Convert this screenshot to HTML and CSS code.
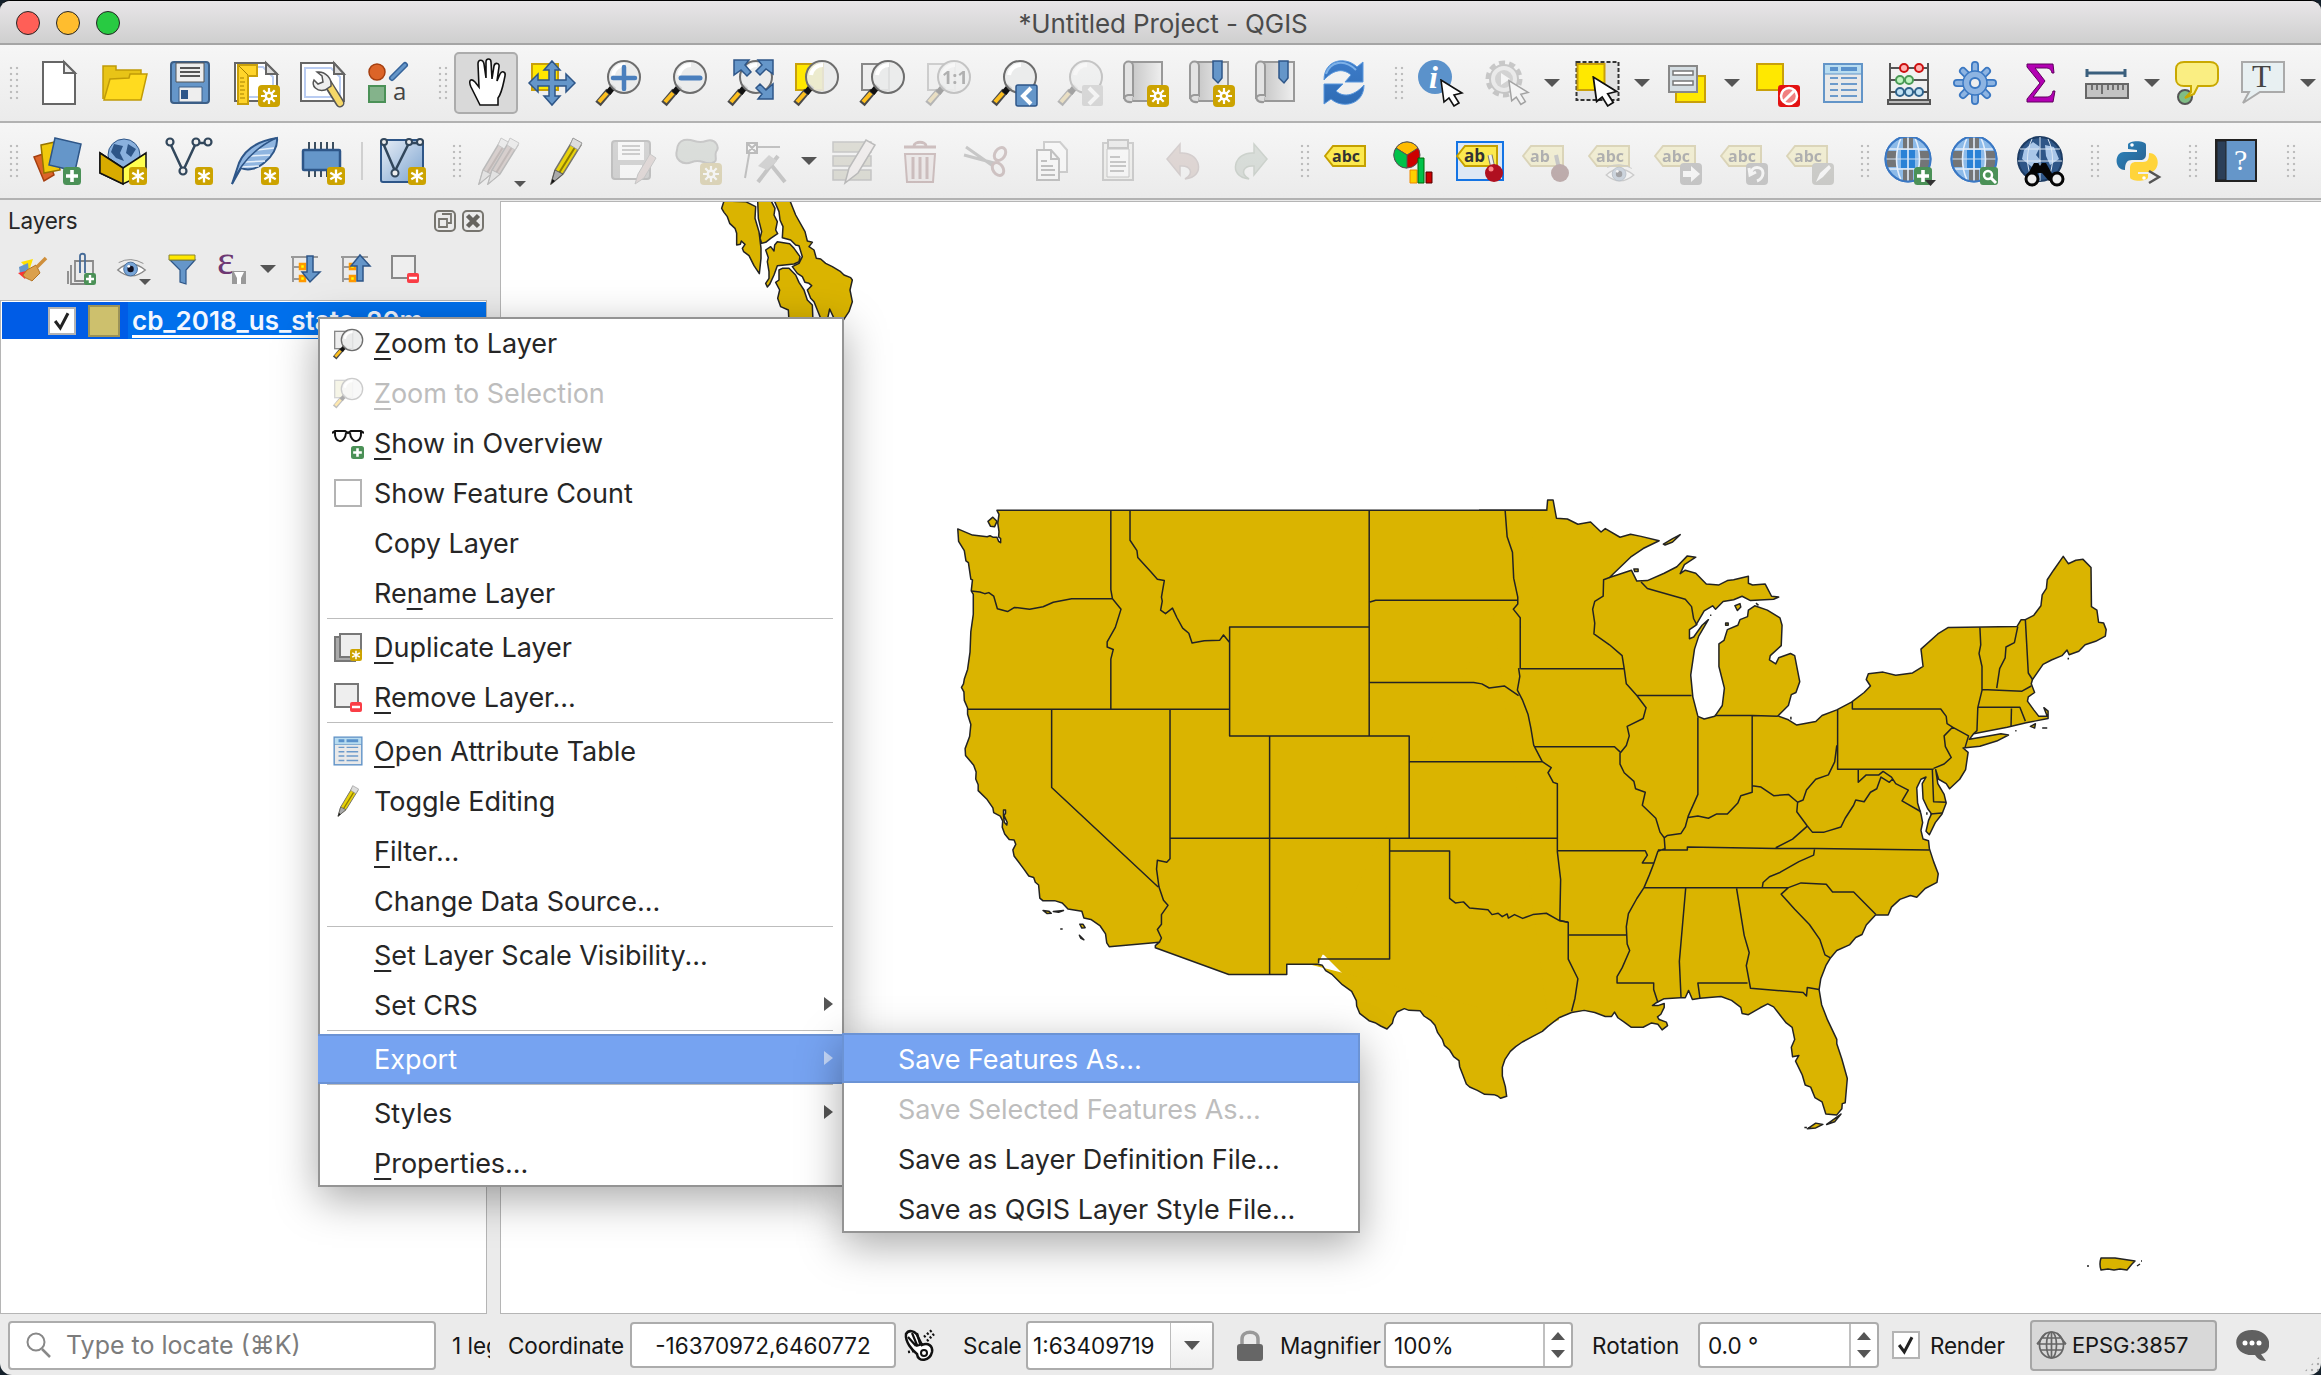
FILE: index.html
```html
<!DOCTYPE html>
<html lang="en">
<head>
<meta charset="utf-8">
<title>*Untitled Project - QGIS</title>
<link rel="stylesheet" href="styles.css">
</head>
<body>
<svg class="defs" width="0" height="0">
  <defs>
    <linearGradient id="py" x1="0" y1="0" x2="1" y2="1"><stop offset="0" stop-color="#2a86c0"/><stop offset="1" stop-color="#2b5f8c"/></linearGradient>
    <linearGradient id="blue" x1="0" y1="0" x2="1" y2="1"><stop offset="0" stop-color="#e8eef6"/><stop offset="1" stop-color="#7ba3d0"/></linearGradient>
    <linearGradient id="scroll" x1="0" y1="0" x2="1" y2="0"><stop offset="0" stop-color="#c8c8c8"/><stop offset="1" stop-color="#efefef"/></linearGradient>
    <linearGradient id="refresh" x1="0" y1="0" x2="0" y2="1"><stop offset="0" stop-color="#3d7cc9"/><stop offset="1" stop-color="#2f6cb5"/></linearGradient>
  </defs>
  <symbol id="star" viewBox="0 0 22 22"><rect width="22" height="22" rx="4" fill="#cca300"/><path d="M11 3v16M4 7l14 8M18 7L4 15" stroke="#fff" stroke-width="2.8" fill="none"/></symbol>
  <symbol id="gearstar" viewBox="0 0 22 22"><rect width="22" height="22" rx="4" fill="#cca300"/><path d="M11 3v16M3 11h16M5.3 5.3l11.400 11.400M16.700 5.300L5.300 16.700" stroke="#fff" stroke-width="2.200" fill="none"/><circle cx="11" cy="11" r="4.500" fill="#fff"/><circle cx="11" cy="11" r="2" fill="#cca300"/></symbol>
  <symbol id="plus" viewBox="0 0 18 18"><rect width="18" height="18" rx="3.500" fill="#4b9157"/><path d="M9 3v12M3 9h12" stroke="#fff" stroke-width="3.600"/></symbol>
  <symbol id="loupe" viewBox="0 0 48 48"><path d="M4 45L15 32" stroke="#4a4a4a" stroke-width="7"/><path d="M5 43L13 34" stroke="#fdbf1e" stroke-width="4"/><path d="M14 34L20 27" stroke="#111" stroke-width="6"/><circle cx="30" cy="18" r="16" fill="#e9ebeb" fill-opacity=".88" stroke="#6d6d6d" stroke-width="2"/><path d="M19 16c1-6 6-10 12-10" stroke="#fff" stroke-width="4" fill="none"/></symbol>
  <symbol id="pencil" viewBox="0 0 48 48"><path d="M9 47l4-14L31 3l8 5-18 29z" fill="#e8d20a" stroke="#77756b" stroke-width="1.500"/><path d="M17 36L35 7" stroke="#8c7c00" stroke-width="2"/><path d="M9 47l4-14 8 4z" fill="#aaa" stroke="#555"/><path d="M28 8l3-7 9 5-4 7z" fill="#ddd" stroke="#999"/><path d="M9 47l1.500-5 2.500 2z" fill="#111"/></symbol>
  <symbol id="redpencil" viewBox="0 0 48 48"><path d="M9 47l4-14L31 3l8 5-18 29z" fill="#b98a80" stroke="#555" stroke-width="1.500"/><path d="M17 36L35 7" stroke="#7a4c44" stroke-width="2"/><path d="M9 47l4-14 8 4z" fill="#ccc" stroke="#555"/><path d="M28 8l3-7 9 5-4 7z" fill="#ddd" stroke="#777"/></symbol>
  <symbol id="tag" viewBox="0 0 48 48"><path d="M1 19L9 9h32v20H9z" fill="#fce94f" stroke="#c4a000" stroke-width="2"/></symbol>
  <symbol id="globe" viewBox="0 0 48 48"><circle cx="24" cy="22" r="22.500" fill="#8dbbe9" stroke="#3a78c4" stroke-width="2"/><path d="M3 14h10v16H3zM19 1h10v11H19zM19 32h10v12H19zM35 14h10v16H35z" fill="#737577"/><path d="M17 13h14v18H17z" fill="#2b82d6"/><path d="M24 0v44M4 12h40M4 32h40" stroke="#e4eefa" stroke-width="1.600"/><path d="M2 22h44" stroke="#cfe0f2" stroke-width="1.200"/><path d="M17 1c-6 13-6 29 0 42M31 1c6 13 6 29 0 42" stroke="#e4eefa" stroke-width="1.600" fill="none"/><circle cx="24" cy="22" r="22.500" fill="none" stroke="#3a78c4" stroke-width="2"/></symbol>
  <symbol id="cursor" viewBox="0 0 24 28"><path d="M1 1l3 22 5-4 5 8 5-3-5-8 8-2z" fill="#fff" stroke="#111" stroke-width="1.600"/></symbol>
  <symbol id="table" viewBox="0 0 48 48"><rect x="5" y="5" width="38" height="38" fill="#e9e9e9" stroke="#6395c8" stroke-width="2"/><rect x="6" y="6" width="36" height="9" fill="#b8dcf0"/><path d="M11 10h8M22 10h16" stroke="#5a92cc" stroke-width="4"/><path d="M11 19h8M22 19h16M11 25h8M22 25h16M11 31h8M22 31h16M11 37h8M22 37h16" stroke="#6c9acb" stroke-width="2"/><path d="M5 15h38" stroke="#6395c8"/></symbol>
  <symbol id="scrollbook" viewBox="0 0 48 48"><path d="M10 3h30v39H10z" fill="url(#scroll)" stroke="#999" stroke-width="2"/><path d="M2 7c0-6 9-6 9 0v30H7c-4 0-5 3-5 3z" fill="#e3e3e3" stroke="#999" stroke-width="2"/><path d="M10 43c-8 1-10-6-4-7h5" fill="#ddd" stroke="#999" stroke-width="2"/></symbol>
  <symbol id="eye" viewBox="0 0 32 24"><path d="M1 13Q15 0 31 13Q16 26 1 13z" fill="#fff" stroke="#888" stroke-width="1.500"/><circle cx="15" cy="12" r="7.500" fill="#77a5d8" stroke="#456b98"/><circle cx="15" cy="12" r="3.500" fill="#112"/><circle cx="13" cy="9" r="1.500" fill="#fff"/><path d="M2 5Q15-2 29 6" stroke="#888" fill="none"/></symbol>
</svg>

<div class="window">
  <header class="titlebar">
    <div class="lights"><i class="red"></i><i class="amber"></i><i class="green"></i></div>
    <h1>*Untitled Project - QGIS</h1>
  </header>

  <div class="toolbar top">
    <span class="handle first"></span>
    <span class="tool"><svg viewBox="0 0 48 48"><path d="M9 3h21l11 11v31H9z" fill="#fff" stroke="#666" stroke-width="2"/><path d="M30 3v11h11z" fill="#eee" stroke="#666" stroke-width="2"/></svg></span>
    <span class="tool"><svg viewBox="0 0 48 48"><path d="M3 40V7h13v4h25v8" fill="#e8c417" stroke="#c09b08" stroke-width="1.500"/><path d="M10 20l19-1 1-4h17l-6 26H4z" fill="#ffdb1f" stroke="#c09b08" stroke-width="1.500"/></svg></span>
    <span class="tool"><svg viewBox="0 0 48 48"><rect x="5" y="3" width="38" height="41" rx="3" fill="#6596c9" stroke="#3c5f87" stroke-width="2"/><path d="M10 4h28v19H10z" fill="#eee" stroke="#555"/><path d="M14 9h20M14 13h20M14 17h20" stroke="#555" stroke-width="2"/><path d="M13 28h23v15H13z" fill="#eee" stroke="#3c5f87"/><rect x="15" y="31" width="7" height="9" fill="#2e5688"/></svg></span>
    <span class="tool"><svg viewBox="0 0 48 48"><path d="M3 4h31l11 11v27H3z" fill="#fff" stroke="#666" stroke-width="2"/><path d="M7 8h24l10 10v20H7z" fill="none" stroke="#b9ccf2" stroke-width="2"/><path d="M34 4v11h11z" fill="#ddd" stroke="#666" stroke-width="2"/><path d="M6 6h19v11H16v28H6z" fill="#ffd42a" stroke="#c9a00a" stroke-width="2"/><path d="M8 19h4M8 23h5M8 27h4M8 31h5M8 35h4M8 39h5M7 7l9 9" stroke="#a58000"/><use href="#gearstar" x="26" y="26" width="22" height="22"/></svg></span>
    <span class="tool"><svg viewBox="0 0 48 48"><path d="M3 4h33l10 11v27H3z" fill="#fff" stroke="#666" stroke-width="2"/><path d="M7 9h26l9 9v20H7z" fill="none" stroke="#b9ccf2" stroke-width="2"/><path d="M36 4v11h10z" fill="#ddd" stroke="#666" stroke-width="2"/><path d="M30 25l12 19" stroke="#555" stroke-width="9" stroke-linecap="round"/><path d="M31 26l11 18" stroke="#f5d768" stroke-width="6" stroke-linecap="round"/><path d="M19 13l5 4 1 6-5 2-4-4c-3 6 3 12 11 10l6-4c1-7-5-15-14-14z" fill="#eee" stroke="#555" stroke-width="1.500"/></svg></span>
    <span class="tool"><svg viewBox="0 0 48 48"><circle cx="13" cy="13" r="8" fill="#dc6428" stroke="#a53f10" stroke-width="1.500"/><path d="M28 19L41 6" stroke="#35639a" stroke-width="6" stroke-linecap="round"/><path d="M28 19L41 6" stroke="#6596c9" stroke-width="3" stroke-linecap="round"/><rect x="5" y="27" width="16" height="16" fill="#84b38b" stroke="#4b9157" stroke-width="2"/><text x="29" y="41" class="g-sans" font-size="24" fill="#444">a</text></svg></span>
    <span class="handle"></span>
    <span class="tool active"><svg viewBox="0 0 48 48"><path d="M18 46L9 28C6 21 9 19 13 23l4 5-1-23c0-5 5-5 6 0l2 14V3c0-4 5-4 5 0l1 17 2-13c1-4 6-3 5 1l-2 14 3-7c2-4 6-2 5 2-2 9-3 17-7 22v7z" fill="#fff" stroke="#111" stroke-width="1.600"/></svg></span>
    <span class="tool"><svg viewBox="0 0 48 48"><rect x="4" y="5" width="26" height="26" fill="#ffe800" stroke="#c9a00a" stroke-width="2"/><path d="M24 2l8 9h-5v10h11v-6l9 9-9 9v-6H27v10h5l-8 9-8-9h5V27H10v6l-9-9 9-9v6h11V11h-5z" fill="#6596c9" stroke="#2e5688" stroke-width="1.500"/></svg></span>
    <span class="tool"><svg viewBox="0 0 48 48"><use href="#loupe"/><path d="M30 8v22M19 19h22" stroke="#4a7fbd" stroke-width="4.500" stroke-linecap="round"/></svg></span>
    <span class="tool"><svg viewBox="0 0 48 48"><use href="#loupe"/><path d="M21 19h19" stroke="#4a7fbd" stroke-width="5" stroke-linecap="round"/></svg></span>
    <span class="tool"><svg viewBox="0 0 48 48"><use href="#loupe"/><path d="M8 1h15l-4 5 6 7-4 4-6-6-7 5zM47 1H32l4 5-6 6 4 4 6-6 7 5zM47 40H32l4-5-6-6 4-4 6 6 7-6z" fill="#6596c9" stroke="#2e5688" stroke-width="1.500"/></svg></span>
    <span class="tool"><svg viewBox="0 0 48 48"><rect x="4" y="5" width="27" height="26" fill="#ffe800" stroke="#c9a00a" stroke-width="2"/><use href="#loupe"/></svg></span>
    <span class="tool"><svg viewBox="0 0 48 48"><rect x="4" y="5" width="27" height="26" fill="#eee" stroke="#888" stroke-width="2"/><use href="#loupe"/></svg></span>
    <span class="tool off"><svg viewBox="0 0 48 48"><rect x="4" y="5" width="27" height="26" fill="#eee" stroke="#888" stroke-width="2"/><use href="#loupe"/><text x="18" y="25" class="g-sans" font-weight="700" font-size="18" fill="#333">1:1</text></svg></span>
    <span class="tool"><svg viewBox="0 0 48 48"><use href="#loupe"/><rect x="26" y="26" width="21" height="21" rx="2" fill="#6596c9" stroke="#2e5688" stroke-width="1.500"/><path d="M41 29l-8 8 8 8" stroke="#fff" stroke-width="4" fill="none"/></svg></span>
    <span class="tool off"><svg viewBox="0 0 48 48"><use href="#loupe"/><rect x="26" y="26" width="21" height="21" rx="2" fill="#aaa"/><path d="M33 29l8 8-8 8" stroke="#fff" stroke-width="4" fill="none"/></svg></span>
    <span class="tool"><svg viewBox="0 0 48 48"><use href="#scrollbook"/><use href="#gearstar" x="25" y="26" width="22" height="22"/></svg></span>
    <span class="tool"><svg viewBox="0 0 48 48"><use href="#scrollbook"/><path d="M25 2h9v17l-4 5-5-5z" fill="#6596c9" stroke="#2e5688" stroke-width="1.500"/><use href="#gearstar" x="25" y="26" width="22" height="22"/></svg></span>
    <span class="tool"><svg viewBox="0 0 48 48"><use href="#scrollbook"/><path d="M25 2h9v17l-4 5-5-5z" fill="#6596c9" stroke="#2e5688" stroke-width="1.500"/></svg></span>
    <span class="tool"><svg viewBox="0 0 48 48"><path d="M4 21C4 0 26-3 37 8l6-5v20H25l6-7c-9-8-19-4-27 5zM44 26C44 46 22 50 11 40l-7 5V25h19l-7 7c9 8 20 3 28-6z" fill="url(#refresh)" stroke="#5a98de"/><path d="M6 15C10 3 24-1 36 11" fill="none" stroke="#7db1e8" stroke-width="2"/></svg></span>
    <span class="handle third"></span>
    <span class="tool"><svg viewBox="0 0 48 48"><circle cx="18" cy="18" r="17" fill="#5b92cb"/><text x="12" y="29" class="g-serif" font-size="32" font-style="italic" font-weight="700" fill="#fff">i</text><use href="#cursor" x="23" y="20" width="24" height="28"/></svg></span>
    <span class="tool off"><svg viewBox="0 0 48 48"><circle cx="21" cy="20" r="16" fill="none" stroke="#777" stroke-width="5" stroke-dasharray="6 4"/><circle cx="21" cy="20" r="14" fill="#ddd" stroke="#777" stroke-width="2"/><circle cx="21" cy="20" r="9" fill="#999"/><path d="M18 14l9 6-9 6z" fill="#fff"/><use href="#cursor" x="25" y="20" width="22" height="27"/></svg></span>
    <span class="drop"></span>
    <span class="tool"><svg viewBox="-1.500 0 48 48"><rect x="2" y="3" width="42" height="38" fill="#e2e2e2" stroke="#333" stroke-width="2" stroke-dasharray="4 2"/><rect x="3" y="5" width="27" height="26" fill="#ffe800" stroke="#c9a00a" stroke-width="2"/><use href="#cursor" x="17" y="17" width="28" height="31"/></svg></span>
    <span class="drop"></span>
    <span class="tool"><svg viewBox="-1 0 48 48"><rect x="12" y="17" width="29" height="26" fill="#ffe800" stroke="#c9a00a" stroke-width="2"/><rect x="5" y="7" width="28" height="26" fill="#d4dde2" stroke="#888" stroke-width="2"/><path d="M9 12h20v4H9zM9 22h20v4H9z" fill="#fff" stroke="#777" stroke-width="1.500"/></svg></span>
    <span class="drop"></span>
    <span class="tool"><svg viewBox="0 0 48 48"><rect x="4" y="5" width="26" height="26" fill="#ffe800" stroke="#c9a00a" stroke-width="2"/><rect x="25" y="26" width="22" height="22" rx="3" fill="#e31212"/><circle cx="36" cy="37" r="8" fill="#f08080" stroke="#fff" stroke-width="2.500"/><path d="M31 42l10-10" stroke="#fff" stroke-width="3"/></svg></span>
    <span class="tool"><svg viewBox="0 0 48 48"><use href="#table"/></svg></span>
    <span class="tool"><svg viewBox="0 0 48 48"><path d="M5 4v37M43 4v37M5 9h38M5 21h38M5 33h38" stroke="#555" stroke-width="2"/><g stroke-width="2"><g fill="#ffb3b3" stroke="#c11"><circle cx="19" cy="9" r="4"/><circle cx="34" cy="9" r="4"/></g><g fill="#c0f5c0" stroke="#4a9a55"><circle cx="15" cy="21" r="4"/><circle cx="24" cy="21" r="4"/></g><g fill="#c2e2f5" stroke="#30638c"><circle cx="15" cy="33" r="4"/><circle cx="24" cy="33" r="4"/><circle cx="34" cy="33" r="4"/></g></g><rect x="3" y="41" width="42" height="4" fill="#bbb" stroke="#555" stroke-width="2"/></svg></span>
    <span class="tool"><svg viewBox="0 0 48 48"><g stroke="#3b78c2" stroke-width="8" stroke-linecap="round"><path d="M24 6v36M6 24h36M12 12l24 24M36 12L12 36"/></g><g stroke="#8db4e2" stroke-width="4.500" stroke-linecap="round"><path d="M24 6v36M6 24h36M12 12l24 24M36 12L12 36"/></g><circle cx="24" cy="24" r="12" fill="#8db4e2" stroke="#3b78c2" stroke-width="1.500"/><circle cx="24" cy="24" r="5" fill="#eee" stroke="#3b78c2" stroke-width="2"/></svg></span>
    <span class="tool"><svg viewBox="0 0 48 48"><path d="M10 5h26l1 9h-2c-1-4-3-5-7-5H18l10 13-12 16h13c4 0 6-2 7-6h2l-2 11H10v-3l13-16L10 8z" fill="#b300b3" stroke="#5e005e"/></svg></span>
    <span class="tool"><svg viewBox="0 0 48 48"><path d="M4 14h38M4 10v8M42 10v8" stroke="#3a5f7d" stroke-width="3"/><rect x="3" y="25" width="42" height="14" fill="#c3c3c3" stroke="#666" stroke-width="2"/><path d="M9 26v5M14 26v5M19 26v9M25 26v5M30 26v5M35 26v5M40 26v5" stroke="#555" stroke-width="1.500"/></svg></span>
    <span class="drop"></span>
    <span class="tool"><svg viewBox="0 0 48 48"><circle cx="12" cy="38" r="7" fill="#80bd86" stroke="#555" stroke-width="2"/><path d="M11 3h26c5 0 8 3 8 7v10c0 4-3 7-8 7H25l-4 8-9 4 6-6v-6h-7c-5 0-8-3-8-7V10c0-4 3-7 8-7z" fill="#faee82" stroke="#c9a800" stroke-width="2"/></svg></span>
    <span class="tool"><svg viewBox="0 0 48 48"><path d="M3 3h42v30H21L4 44l6-11H3z" fill="#e8f0f2" stroke="#aaa" stroke-width="2"/><text x="13" y="28" class="g-serif" font-size="31" fill="#444">T</text></svg></span>
    <span class="drop"></span>
  </div>

  <div class="toolbar">
    <span class="handle first"></span>
    <span class="tool"><svg viewBox="0 0 48 48"><path d="M1 20l12-4 8 22-10 6z" fill="#dc6428" stroke="#a53f10" stroke-width="1.500"/><path d="M8 8l14-3 5 28-16 3z" fill="#f0c90c" stroke="#967300" stroke-width="1.500"/><path d="M22 1l26 6-6 27-26-6z" fill="#6596c9" stroke="#2e5688" stroke-width="1.500"/><use href="#plus" x="30" y="30" width="18" height="18"/></svg></span>
    <span class="tool"><svg viewBox="0 0 48 48"><circle cx="25" cy="18" r="16" fill="#8ab1de" stroke="#2e5688"/><path d="M15 7l9 2-3 7 4 8-8-3-5-6zM29 7l8 5-5 8-5-4z" fill="#2e5688"/><path d="M1 16l23 15 23-15v20L24 47 1 36z" fill="#ffff4f" stroke="#111" stroke-width="1.500"/><path d="M1 16l23 15v16L1 36z" fill="#d9ab00" stroke="#111" stroke-width="1.500"/><use href="#star" x="30" y="30" width="18" height="18"/></svg></span>
    <span class="tool"><svg viewBox="0 0 48 48"><path d="M5 6l13 28L31 6h11" stroke="#32475c" stroke-width="2.500" fill="none"/><g fill="#eee" stroke="#32475c" stroke-width="2.200"><circle cx="5" cy="5" r="3.500"/><circle cx="18" cy="34" r="3.500"/><circle cx="31" cy="5" r="3.500"/><circle cx="43" cy="5" r="3.500"/></g><use href="#star" x="30" y="30" width="18" height="18"/></svg></span>
    <span class="tool"><svg viewBox="0 0 48 48"><path d="M1 47l7-21C14 12 26 4 46 1c1 9-5 19-13 25-7 6-16 8-23 5z" fill="#8fb5e0" stroke="#2e5688" stroke-width="2"/><path d="M14 25l20-1M19 19l20-1M26 13l17-2M10 30l18-1" stroke="#e7f0fa" stroke-width="1.500" fill="none"/><path d="M1 47C9 27 22 12 45 1" stroke="#2e5688" fill="none" stroke-width="1.500"/><use href="#star" x="30" y="30" width="18" height="18"/></svg></span>
    <span class="tool"><svg viewBox="0 0 48 48"><path d="M12 5v35M18 5v35M24 5v35M30 5v35M36 5v35" stroke="#3c4f60" stroke-width="2"/><rect x="6" y="13" width="37" height="20" rx="1" fill="#6596c9" stroke="#2e5688" stroke-width="2.500"/><use href="#star" x="30" y="30" width="18" height="18"/></svg></span>
    <span class="vsep"></span>
    <span class="tool"><svg viewBox="0 0 48 48"><rect x="3" y="3" width="42" height="42" rx="2" fill="url(#blue)" stroke="#2e5688" stroke-width="2"/><path d="M5 6l12 28L31 6h11" stroke="#32475c" stroke-width="2.500" fill="none"/><g fill="#eee" stroke="#32475c" stroke-width="2"><circle cx="6" cy="5" r="3"/><circle cx="17" cy="36" r="3.500"/><circle cx="31" cy="5" r="3"/><circle cx="42" cy="5" r="3"/></g><use href="#star" x="30" y="30" width="18" height="18"/></svg></span>
    <span class="handle"></span>
    <span class="tool off"><svg viewBox="0 0 48 48"><use href="#redpencil" x="-6"/><use href="#redpencil" x="3"/></svg><b class="corner"></b></span>
    <span class="tool"><svg viewBox="0 0 48 48"><use href="#pencil"/></svg></span>
    <span class="tool off"><svg viewBox="0 0 48 48"><rect x="4" y="4" width="38" height="38" rx="3" fill="#999" stroke="#666" stroke-width="2"/><path d="M10 5h26v18H10z" fill="#fff"/><path d="M14 9h18M14 13h18M14 17h18" stroke="#888" stroke-width="2"/><path d="M12 28h22v13H12z" fill="#fff"/><path d="M27 47l3-10 12-20 6 4-12 20z" fill="#d3a5a0" stroke="#777"/></svg></span>
    <span class="tool off"><svg viewBox="0 0 48 48"><path d="M10 3c10-2 12 5 22 1 10-3 14 6 10 11-2 5 3 9-4 11-8 2-11-5-20-1C8 29 0 22 3 13c0-5 3-9 7-10z" fill="#a9b9a9" stroke="#777" stroke-width="2"/><use href="#gearstar" x="26" y="26" width="22" height="22"/></svg></span>
    <span class="tool off"><svg viewBox="0 0 48 48"><path d="M12 10h28M10 12L5 41" stroke="#666" stroke-width="2"/><path d="M7 6h10v10H7zM7 6l10 10M17 6L7 16" fill="#fff" stroke="#555" stroke-width="2"/><path d="M18 45l20-26M28 24l17 21" stroke="#777" stroke-width="4"/><path d="M18 29l11-11 8 6-10 9z" fill="#999"/></svg></span>
    <span class="drop"></span>
    <span class="tool off"><svg viewBox="0 0 48 48"><g fill="#b5b38a" stroke="#777" stroke-width="1.500"><path d="M3 5h38v10H3zM3 19h38v10H3zM3 33h38v10H3z"/></g><path d="M15 46l4-15L36 3l9 5-17 28z" fill="#f2e0de" stroke="#555" stroke-width="1.500"/></svg></span>
    <span class="tool off"><svg viewBox="0 0 48 48"><path d="M9 17h30l-2 28H11z" fill="#ead5d5" stroke="#a55" stroke-width="2"/><path d="M8 10h32M18 9c0-5 12-5 12 0M17 20v22M24 20v22M31 20v22" stroke="#a55" stroke-width="3" fill="none"/></svg></span>
    <span class="tool off"><svg viewBox="0 0 48 48"><path d="M2 18l30 8M4 10l27 19" stroke="#777" stroke-width="3"/><ellipse cx="38" cy="17" rx="5" ry="7" transform="rotate(35 38 17)" fill="none" stroke="#a66" stroke-width="3"/><ellipse cx="36" cy="32" rx="5" ry="7" transform="rotate(-35 36 32)" fill="none" stroke="#a66" stroke-width="3"/></svg></span>
    <span class="tool off"><svg viewBox="0 0 48 48"><path d="M16 5h16l7 8v22H16z" fill="#fff" stroke="#888" stroke-width="2"/><path d="M9 13h14l8 9v21H9z" fill="#fff" stroke="#666" stroke-width="2"/><path d="M23 13v9h8M13 24h6M13 29h12M13 33h14M13 38h14" stroke="#666" stroke-width="2" fill="none"/></svg></span>
    <span class="tool off"><svg viewBox="0 0 48 48"><path d="M9 6h30v37H9z" fill="#e9e9e0" stroke="#888" stroke-width="2"/><path d="M13 12h22v28H13z" fill="#fff" stroke="#777"/><path d="M14 3h20v8H14z" fill="#ddd" stroke="#777" stroke-width="2"/><path d="M16 20h10M16 25h16M16 29h16M16 34h14" stroke="#777" stroke-width="2"/></svg></span>
    <span class="tool off"><svg viewBox="0 0 48 48"><path d="M7 22L20 7v9c20-2 27 24 5 26 10-6 5-14-5-13v9z" fill="#cf9f92" stroke="#a88" stroke-width="1.500"/></svg></span>
    <span class="tool off"><svg viewBox="0 0 48 48"><path d="M41 22L28 7v9C8 14 1 40 23 42c-10-6-5-14 5-13v9z" fill="#a0bba4" stroke="#7c9c7c" stroke-width="1.500"/></svg></span>
    <span class="handle"></span>
    <span class="tool"><svg viewBox="0 0 48 48"><use href="#tag"/><text x="8" y="25" class="g-sans" font-weight="700" font-size="16" fill="#333">abc</text></svg></span>
    <span class="tool"><svg viewBox="0 0 48 48"><circle cx="17" cy="18" r="13" fill="#c00" stroke="#555"/><path d="M17 18L6 11A13 13 0 0 1 28 11z" fill="#fb0" stroke="#555"/><path d="M17 18L6 11A13 13 0 0 0 17 31z" fill="#00c24a" stroke="#555"/><path d="M20 33h7v13h-7z" fill="#ffd000" stroke="#e80"/><path d="M28 21h6v25h-6z" fill="#00c24a" stroke="#060"/><path d="M36 35h6v11h-6z" fill="#c00" stroke="#500"/></svg></span>
    <span class="tool"><svg viewBox="0 0 48 48"><rect x="1" y="5" width="46" height="38" fill="#dde8f5" stroke="#1474e4" stroke-width="2"/><use href="#tag"/><text x="8" y="25" class="g-sans" font-weight="700" font-size="17" fill="#333">ab</text><path d="M34 18l4 18" stroke="#777" stroke-width="5"/><path d="M34 18l4 18" stroke="#eee" stroke-width="3"/><circle cx="38" cy="36" r="9" fill="#b01020"/><circle cx="35" cy="32" r="2.500" fill="#f88"/></svg></span>
    <span class="tool off"><svg viewBox="0 0 48 48"><use href="#tag"/><text x="8" y="25" class="g-sans" font-weight="700" font-size="16" fill="#333">ab</text><path d="M34 18l4 18" stroke="#777" stroke-width="4"/><circle cx="38" cy="36" r="9" fill="#822"/></svg></span>
    <span class="tool off"><svg viewBox="0 0 48 48"><use href="#tag"/><text x="8" y="25" class="g-sans" font-weight="700" font-size="16" fill="#333">abc</text><use href="#eye" x="16" y="26" width="32" height="22"/></svg></span>
    <span class="tool off"><svg viewBox="0 0 48 48"><use href="#tag"/><text x="8" y="25" class="g-sans" font-weight="700" font-size="16" fill="#333">abc</text><rect x="26" y="26" width="22" height="22" rx="4" fill="#777"/><path d="M29 34h8v-5l9 8-9 8v-5h-8z" fill="#fff"/></svg></span>
    <span class="tool off"><svg viewBox="0 0 48 48"><use href="#tag"/><text x="8" y="25" class="g-sans" font-weight="700" font-size="16" fill="#333">abc</text><rect x="26" y="26" width="22" height="22" rx="4" fill="#777"/><path d="M31 37c0-9 12-8 12-1 0 4-3 7-6 8M36 35l-6 3-1-7" stroke="#fff" stroke-width="3" fill="none"/></svg></span>
    <span class="tool off"><svg viewBox="0 0 48 48"><use href="#tag"/><text x="8" y="25" class="g-sans" font-weight="700" font-size="16" fill="#333">abc</text><rect x="26" y="26" width="22" height="22" rx="4" fill="#887"/><path d="M30 45l4-9 9-8 2 3-8 9z" fill="#fff"/></svg></span>
    <span class="handle"></span>
    <span class="tool"><svg viewBox="0 0 48 48"><use href="#globe"/><use href="#plus" x="30" y="30" width="18" height="18"/><path d="M41 43h11l-5.500 6z" fill="#333"/></svg></span>
    <span class="tool"><svg viewBox="0 0 48 48"><use href="#globe"/><rect x="30" y="30" width="18" height="18" rx="3" fill="#4b9157"/><circle cx="38" cy="38" r="4" fill="none" stroke="#fff" stroke-width="2.500"/><path d="M41 41l5 5" stroke="#fff" stroke-width="3"/></svg></span>
    <span class="tool"><svg viewBox="0 0 48 48"><circle cx="24" cy="22" r="22" fill="#2e5688" stroke="#1d3c63" stroke-width="2"/><path d="M8 13l9-8 7 5-4 8 5 6-9 6-10-8zM29 8l9 2 5 12-9 6-4-9z" fill="#a9c6e8"/><path d="M24 0v44M4 12h40M2 24h44M16 2c-6 13-6 27 0 40M32 2c6 13 6 27 0 40" stroke="#dbe7f4" fill="none"/><path d="M9 42l9-16h4l2 3 2-3h4l9 16-6 2-7-8h-4l-7 8z" fill="#050505"/><circle cx="16" cy="42" r="6" fill="#eee" stroke="#050505" stroke-width="3"/><circle cx="41" cy="42" r="6" fill="#eee" stroke="#050505" stroke-width="3"/></svg></span>
    <span class="handle"></span>
    <span class="tool"><svg viewBox="0 0 48 48"><path d="M14 12V8c0-5 18-5 18 0v9c0 4-2 6-6 6h-8c-5 0-7 3-7 10-11 0-11-18-1-18h13v-2z" fill="url(#py)"/><circle cx="18" cy="8" r="1.800" fill="#fff"/><path d="M34 37v3c0 5-18 5-18 0v-9c0-4 2-6 6-6h7c5 0 6-3 6-9 12 0 11 19 1 19H24v2z" fill="#ffd43b"/><circle cx="30" cy="41" r="1.800" fill="#fff"/><path d="M35 34l10 6-10 6" fill="none" stroke="#555" stroke-width="2.500"/></svg></span>
    <span class="handle"></span>
    <span class="tool"><svg viewBox="0 0 48 48"><rect x="4" y="3" width="40" height="41" fill="#6596c9" stroke="#222" stroke-width="2"/><rect x="5" y="4" width="9" height="39" fill="#2b3f58" stroke="#222"/><text x="22" y="33" class="g-serif" font-size="30" fill="#fff">?</text></svg></span>
    <span class="handle"></span>
  </div>

  <main class="workspace">
    <aside class="layers">
      <div class="dock-title"><span>Layers</span>
        <svg width="22" height="22" viewBox="0 0 22 22"><rect x="1" y="1" width="20" height="20" rx="4" fill="none" stroke="#77756f" stroke-width="2"/><path d="M8 4h9v9h-3M5 9h8v8H5z" fill="none" stroke="#77756f" stroke-width="1.800"/></svg>
        <svg width="22" height="22" viewBox="0 0 22 22"><rect x="1" y="1" width="20" height="20" rx="4" fill="none" stroke="#77756f" stroke-width="2"/><path d="M5.500 5.500l11 11M16.500 5.500l-11 11" stroke="#66645f" stroke-width="4.500"/></svg>
      </div>
      <div class="dock-tools">
        <span class="mini"><svg viewBox="0 0 32 32"><path d="M5 9l12-3-4 12z" fill="#ffe000"/><path d="M3 14l9-4 1 10-9 1z" fill="#6596c9"/><path d="M2 20l12-3-5 9z" fill="#f33"/><path d="M11 17l9-5 4 8-8 8c-3-2-8-3-9-6z" fill="#dba04c" stroke="#b47424"/><path d="M21 14l9-9" stroke="#cf8f3c" stroke-width="3.500"/></svg></span>
        <span class="mini"><svg viewBox="0 0 32 32"><path d="M9 8h18v20H9zM5 12v19h16M2 18v13" fill="none" stroke="#888" stroke-width="1.800"/><path d="M14 20V3c0-3 5-3 5 0v17" fill="none" stroke="#456b98" stroke-width="1.800"/><use href="#plus" x="18" y="20" width="12" height="12"/></svg></span>
        <span class="mini"><svg viewBox="0 0 32 32"><use href="#eye" x="0" y="5" width="31" height="22"/><path d="M23 26h12l-6 6z" fill="#555"/></svg></span>
        <span class="mini"><svg viewBox="0 0 32 32"><path d="M4 7h25L20 17v14l-6-2V17z" fill="#6596c9" stroke="#2e5688" stroke-width="1.200"/><path d="M3 2h26v5H3z" fill="#ffe800" stroke="#8a8330"/></svg></span>
        <span class="mini"><svg viewBox="0 0 32 32"><text x="1" y="21" class="g-serif" font-size="42" fill="#6d3873">ε</text><path d="M16 18h14v13H16z" fill="#999"/><path d="M18 19h10l-3 6v6h-4v-6z" fill="#fff"/></svg></span>
        <span class="drop small"></span>
        <span class="mini"><svg viewBox="0 0 32 32"><path d="M2 4h27M4 4v25M4 14h6M4 26h6" stroke="#999" stroke-width="2"/><path d="M11 11h5v5h-5zM11 23h5v5h-5z" fill="#ff0" stroke="#f90" stroke-width="2.500"/><path d="M18 3h6v16h7l-10 10-8-10h5z" fill="#6596c9" stroke="#2e5688" stroke-width="1.500"/></svg></span>
        <span class="mini"><svg viewBox="0 0 32 32"><path d="M2 4h27M4 4v25M4 14h6M4 26h6" stroke="#999" stroke-width="2"/><path d="M11 11h5v5h-5zM11 23h5v5h-5z" fill="#ff0" stroke="#f90" stroke-width="2.500"/><path d="M18 28h6V13h7L21 2l-9 11h6z" fill="#6596c9" stroke="#2e5688" stroke-width="1.500"/></svg></span>
        <span class="mini"><svg viewBox="0 0 32 32"><path d="M3 3h23v22H3z" fill="#eee" stroke="#888" stroke-width="2"/><rect x="18" y="20" width="12" height="10" rx="2" fill="#fa3e46"/><path d="M20 25h8" stroke="#fff" stroke-width="2.500"/></svg></span>
      </div>
      <div class="tree">
        <div class="row"><span class="check"><svg viewBox="0 0 28 28"><path d="M6 14l6 8L21 5" fill="none" stroke="#222" stroke-width="3.500"/></svg></span><i class="swatch"></i><b>cb_2018_us_state_20m</b></div>
      </div>
    </aside>
    <section class="canvas">
      <svg viewBox="502 202 1820 1111" width="1820" height="1111">
        <g class="land">
          <path class="plain" d="M1200 520H1560V1020L1549 1025 1530 1031 1500 1040 1450 1020 1420 1008 1385 1008 1370 1000 1325 955 1250 930Z"/>
          <g transform="translate(1310 950) scale(.33333)"><path d="M0 43H26L40 46 50 62 70 74 100 104 128 124 142 152 143 168 152 190 180 212 198 218 215 228 234 237 250 220 254 204 264 186 286 176 300 181 333 182 345 198 366 212 378 226 386 248 400 268 406 286 422 300 434 320 450 332 452 350 462 376 472 402 482 411 505 421 527 433 555 434 566 438 575 445 593 439 589 410 580 378 580 352 588 328 604 304 620 290 640 276 670 260 700 244 720 226"/></g>
          <g transform="translate(1480 480) scale(.42092 .43367)"><path d="M166 1258L190 1240 220 1228 250 1223 275 1228 300 1237 315 1237 322 1227 330 1240 345 1250 362 1262 390 1262 410 1252 425 1255 435 1268 448 1258 445 1250 428 1244 424 1238 432 1232 440 1216 440 1207 425 1212 412 1212 420 1206 440 1196 478 1194 490 1194 498 1177 507 1198 525 1195 575 1191 600 1200 622 1216 625 1230 640 1233 668 1217 686 1208 700 1215 716 1235 730 1252 744 1262 750 1290 742 1308 745 1330 760 1327 752 1340 768 1372 775 1395 788 1400 798 1424 815 1434 824 1462 850 1464 862 1450 863 1438 870 1436 875 1380 862 1335 850 1300 850 1290 828 1245 814 1210 808 1175 812 1150 824 1120 835 1102 850 1085 880 1072 895 1055 910 1048 920 1026 942 1003 972 1003 980 985 1000 967 1025 958 1040 962 1060 942 1088 928 1091 908 1080 880 1070 850 1068 832 1055 828 1050 808 1054 790 1050 770 1042 745 1040 710 1050 690 1062 685 1053 700 1055 735 1066 758 1075 770 1068 785 1062 810 1070 818 1084 790 1100 770 1110 745 1105 725 1090 700 1085 668 1092 690 1110 700 1118 712 1142 690 1156 668 1162 628 1150 618 1190 614 1230 602 1258 588 1240 585 1200 592 1165 598 1175 585 1255 570 1300 560 1320 556 1352 550 1352 533 1342 525 1350 545 1330 545 1318 530 1303 510 1305 500 1320 490 1312 470 1315 460 1340 425 1360 415 1385 405 1397 392 1402 403 1425 395 1440 380 1465 372 1488 360 1490 345 1484 330 1472 328 1468 300 1455 292 1454 202 1435 183 1418 185 1400 193 1388 176 1365 208 1350 230 1348 250 1338 265 1335 290 1318 312 1298 322 1288 322 1278 338 1115 340 1090 355 1050 390 1055 430 1030 445 990 450 960 443 925 447 920 460 930 475 915 490 885 512 850 530 815 543 800 557 755 565 735 553 710 544 735 520 742 495 753 490 762 465 757 440 750 405 740 400 712 410 705 424 690 415 692 405 718 382 720 335 715 318 685 300 655 290 640 300 638 315 620 322 615 335 590 345 582 370 570 378 570 430 583 480 578 520 560 545 535 551 520 545 508 500 503 450 512 390 522 360 545 322 530 335 510 362 500 366 500 345 515 335 535 302 555 290 562 298 580 280 605 276 625 268 645 278 700 275 712 270 695 268 680 240 650 242 640 238 640 222 605 230 590 232 570 242 540 240 515 215 490 208 478 216 488 195 515 178 495 175 470 200 440 215 400 232 375 233 362 208 310 225 360 178 390 158 428 140 385 130 360 125 335 132 300 112 290 120 265 97 235 102 210 90 184 88 176 46 163 46 161 70H0"/>
            <path class="line" d="M98 435H345M310 225L296 230 295 268 275 280 270 298 275 330 273 355 310 380 340 405 345 435 350 470 375 497 397 525 390 550 352 568 357 590 350 612 335 630 335 655 345 675 368 695 372 712 395 720 388 750 420 780 430 812 440 825 447 820 480 815 490 800 497 775 520 725V547M133 615H322L335 627M375 497H505M385 235L400 250 490 275 505 292 510 320 518 335M649 545V705M560 543H650L710 545M497 778L520 775 545 780 565 770 590 770 615 745 622 728 649 720V705L670 708 700 728 735 725 757 743 770 738 778 715 800 690 830 680 845 650 850 612M852 530V667H1080M757 743L755 765 780 798 792 812 820 812 860 800 870 780 890 750 895 738 915 742 930 720 945 712 955 685 975 697 982 690M780 798L745 828 705 848M425 853H495V846L705 850H800L1070 853M797 852L795 865 760 880 715 905 690 915 675 928 673 940M392 940H735L765 929 825 932 840 950H890L943 1002M735 940L718 955 750 990 785 1025 810 1060 822 1095 835 1102M440 825L442 850 425 856 415 885 405 910 392 940 375 965 355 1000 350 1030 352 1070 358 1085 340 1125 328 1145V1160H415V1175L425 1205M187 855H395L400 865 388 883H415M214 1049H350M192 1016L212 1020V1105L235 1150 228 1195 220 1225M491 942L476 1110 480 1194M612 942L630 1050 642 1090 635 1120 645 1172 770 1182 778 1190 780 1170 808 1175M638 1160H520L525 1195M901 667V697L920 680 950 680 960 672 980 685 990 700 1020 715 1005 740 1050 765M1077 667L1080 742 1110 743M1072 770L1100 768M887 512V528H1097L1110 545 1112 562 1125 570 1105 590 1108 615 1122 640 1105 655 1080 665M1125 570L1163 590 1155 616M1190 340L1192 380 1188 400 1195 430 1195 485 1185 525 1183 578 1175 585M1280 338L1272 375 1252 385 1250 410 1237 435 1230 480M1195 483L1290 487 1312 475M1185 524H1285L1298 556M1265 527L1264 568M1298 322L1305 445 1315 460"/>
            <path d="M438 148L460 135 478 126 460 143 442 150ZM368 205h10v6h-8ZM608 290l12-5 2 8-8 8ZM773 1493h6M780 1496L800 1483 817 1486 800 1494ZM826 1486L860 1462 845 1480ZM586 330h6v5h-6ZM658 284l6 5M549 312h3M741 546v6M1310 568l12-6-2 10ZM1338 572h12M1400 410v4M1274 578h3M1064 766v6"/>
          </g>
          <g transform="translate(940 480) scale(.40816 .34439)"><path d="M1488 88H142L147 100 144 125 147 150 146 165 151 170V182L146 178 142 166 132 166 125 162 118 165 82 160 46 142 48 178 62 205 66 235 72 240 78 288 82 290 79 322 84 332V390L78 440 76 500 70 550 62 578 60 592 55 602 61 615 62 640 70 662V680L78 710 75 745 64 780 65 800 85 828 91 848 90 868 96 885V902L118 928 132 952 134 966 150 976 156 990 155 1008 161 1028 172 1044 184 1045 188 1058 181 1074 184 1092 208 1130 220 1150 232 1154 236 1168 244 1176 247 1214 255 1222H285L302 1228 316 1246 350 1252 355 1272 372 1276 395 1295 408 1318 411 1344 417 1355 540 1342 530 1352V1358L710 1436H852V1406H928"/>
            <path class="line" d="M79 322L100 325 112 330 122 327 134 337 143 374 168 382 185 370 222 375 255 368 280 355 325 345H425M421 88V318L425 345 446 375 432 428 412 470V485L427 492 421 520V664M468 88V175L485 205 487 225 520 268 535 288 552 292 545 340 547 352 543 378 555 388 572 372 583 400 597 430 612 445 620 473 650 467 688 465 697 450 712 472M1054 427H712V743H1152V1040M1054 88V743M1054 355L1070 349H1418M1387 88L1392 165 1405 210 1408 285 1418 340V360L1407 375 1424 400V548M1054 588H1310L1330 592 1348 604 1385 598 1420 626M1420 546L1423 570 1417 610 1430 640 1443 680 1450 720 1457 770 1478 818 1500 835 1492 850 1505 878 1515 882V1080L1523 1160 1521 1280M70 666H712M276 666V893L537 1182M566 666V1100L558 1110 535 1104 533 1130 539 1182 550 1220 561 1235 545 1262V1290L535 1305 545 1330 540 1342M566 1040H1515M810 743V1436M1152 818H1478M1104 1040V1077H1251V1215L1265 1228 1285 1225 1300 1243 1345 1248 1355 1262 1370 1258 1380 1268 1392 1260 1395 1272 1410 1262 1430 1273 1455 1262 1488 1258 1521 1280 1541 1284M1104 1077V1391H930V1404"/>
            <path d="M120 120l12-12 10 12-6 16-10-2ZM255 1250l14 2 6 6-10 1ZM280 1253l25-3-12 5ZM345 1290h8l5 10-8 1ZM297 1304h6M344 1322l11 13-8-5Z"/><path class="bay" d="M158 958h5v10l-4 6 8 20-1 8-6-8-2-20Z"/>
          </g>
          <g transform="translate(700 195) scale(.33333)"><path d="M75 18L68 40 75 52 85 65 92 85 108 100 113 115 113 150 124 148 127 138 138 148 130 160 134 170 150 182 165 212 181 236 186 190 186 160 180 110 168 70 170 35 140 20ZM176 15L178 70 188 110 183 130 188 145 200 142 215 130 236 116 230 105 235 80 225 60 228 40 215 15ZM225 15L240 50 243 75 252 95 250 128 275 135 290 150 300 152 310 185 300 205 280 215 295 235 310 245 318 262 330 265 338 272 325 285 335 310 345 320 365 370H386L392 342 405 370 430 380 450 350 460 320 453 285 460 255 455 248 435 240 425 230 400 215 380 205 365 192 352 190 345 165 330 155 340 142 325 138 318 110 290 60 272 15ZM200 165L215 155 225 168 227 150 235 140 272 146 285 160 303 185 300 200 285 207 235 212 225 240 212 268 205 276 200 265 210 250 210 230 205 200 208 188ZM240 225L250 220 270 220 290 240 300 262 315 285 325 315 340 330 342 380H270L268 345 245 335 236 310 242 285 230 262 240 255Z"/></g>
          <path d="M2102 1258h14l20 3-3 3-5 6-7-1-6 1-6-1-7 1q-2-6 0-12ZM2088 1266h2M2138 1266l3-2M2142 1261h1"/>
        </g>
      </svg>
    </section>
  </main>

  <footer class="status">
    <div class="field locator"><svg width="26" height="28" viewBox="0 0 26 28"><circle cx="10" cy="11" r="8.500" fill="none" stroke="#888" stroke-width="2"/><path d="M16 18l8 8" stroke="#888" stroke-width="2.500"/></svg><span>Type to locate (⌘K)</span></div>
    <span class="legend">1 leg</span>
    <label class="lb-coord">Coordinate</label>
    <div class="field coord">-16370972,6460772</div>
    <svg class="mouse" width="32" height="34" viewBox="0 0 32 34"><path d="M2 6c3-5 10-3 12 3l4 8c6-3 11 1 10 7-2 9-14 11-15 2-5-4-12-12-11-20z" fill="#fff" stroke="#111" stroke-width="2.500"/><path d="M8 5l5 12M13 5l3 11M4 9l8 9M12 18l7-2" stroke="#111" stroke-width="2.200"/><path d="M20 9l8-7M23 13l7-7M4 24l6-1" stroke="#111" stroke-width="2.500" stroke-dasharray="2 2"/><circle cx="20" cy="25" r="3" fill="none" stroke="#111" stroke-width="2"/></svg>
    <label class="lb-scale">Scale</label>
    <div class="field combo"><span>1:63409719</span><i></i></div>
    <svg class="lock" width="26" height="31" viewBox="0 0 26 31"><path d="M5 16V9c0-9 16-9 16 0v7" fill="none" stroke="#999" stroke-width="3.500"/><rect y="14" width="26" height="17" rx="3" fill="#666"/></svg>
    <label class="lb-mag">Magnifier</label>
    <div class="field spin mag"><span>100%</span><i></i></div>
    <label class="lb-rot">Rotation</label>
    <div class="field spin rot"><span>0.0 °</span><i></i></div>
    <span class="check"><svg viewBox="0 0 28 28"><path d="M6 14l6 8L21 5" fill="none" stroke="#222" stroke-width="3.500"/></svg></span>
    <label class="lb-render">Render</label>
    <div class="epsg"><svg width="31" height="28" viewBox="0 0 31 28"><g fill="none" stroke="#666" stroke-width="1.700"><ellipse cx="15.500" cy="14" rx="12" ry="13"/><ellipse cx="15.500" cy="14" rx="5" ry="13"/><path d="M1 13h29M4 19h23M6 7h19M15.500 1v26M10 2L1 13M21 2l9 11"/></g></svg>EPSG:3857</div>
    <svg class="bubble" width="33" height="31" viewBox="0 0 33 31"><path d="M16 0c20 0 22 22 9 24l5 7c-6 0-9-3-11-6C-5 27-6 0 16 0z" fill="#606060"/><g fill="#fff"><circle cx="9" cy="13" r="2.500"/><circle cx="16" cy="13" r="2.500"/><circle cx="23" cy="13" r="2.500"/></g></svg>
    <i class="grip"></i>
  </footer>
</div>

<nav class="menu main-menu">
  <a><svg viewBox="0 0 48 48"><rect x="4" y="5" width="27" height="26" fill="#eee" stroke="#888" stroke-width="2"/><use href="#loupe"/></svg><span><u>Z</u>oom to Layer</span></a>
  <a class="disabled"><svg viewBox="0 0 48 48"><rect x="4" y="5" width="27" height="26" fill="#e6e3bb" stroke="#888" stroke-width="2"/><use href="#loupe"/></svg><span><u>Z</u>oom to Selection</span></a>
  <a><svg viewBox="0 0 32 32"><path d="M0 6l3-2h10l3 2 3-2h10l3 2" fill="none" stroke="#111" stroke-width="2.200"/><path d="M3 5c-1 12 10 12 11 1M18 6c1 11 12 11 11-1" fill="none" stroke="#111" stroke-width="2"/><use href="#plus" x="19" y="19" width="13" height="13"/></svg><span><u>S</u>how in Overview</span></a>
  <a><i class="box"></i><span>Show Feature Count</span></a>
  <a><span>Copy Layer</span></a>
  <a><span>Re<u>n</u>ame Layer</span></a>
  <hr>
  <a><svg viewBox="0 0 32 32"><path d="M3 6h20v24H3z" fill="#aaa" stroke="#777" stroke-width="2"/><path d="M8 3h21v23H8z" fill="#eee" stroke="#777" stroke-width="2"/><use href="#star" x="18" y="18" width="12" height="12"/></svg><span><u>D</u>uplicate Layer</span></a>
  <a><svg viewBox="0 0 32 32"><path d="M3 3h23v23H3z" fill="#eee" stroke="#777" stroke-width="2"/><rect x="18" y="21" width="12" height="10" rx="2" fill="#fa3e46"/><path d="M20 26h8" stroke="#fff" stroke-width="2.500"/></svg><span><u>R</u>emove Layer...</span></a>
  <hr>
  <a><svg viewBox="2 2 44 44"><use href="#table" width="48" height="48"/></svg><span><u>O</u>pen Attribute Table</span></a>
  <a><svg viewBox="0 0 48 48"><use href="#pencil"/></svg><span>Toggle Editing</span></a>
  <a><span><u>F</u>ilter...</span></a>
  <a><span>Change Data Source...</span></a>
  <hr>
  <a><span><u>S</u>et Layer Scale Visibility...</span></a>
  <a class="sub"><span>Set CRS</span></a>
  <hr>
  <a class="sub hot"><span>Export</span></a>
  <hr>
  <a class="sub"><span>Styles</span></a>
  <a><span><u>P</u>roperties...</span></a>
</nav>
<nav class="menu sub-menu">
  <a class="hot"><span>Save Features As...</span></a>
  <a class="disabled"><span>Save Selected Features As...</span></a>
  <a><span>Save as Layer Definition File...</span></a>
  <a><span>Save as QGIS Layer Style File...</span></a>
</nav>
</body>
</html>
```
FILE: styles.css
```css
* { box-sizing: border-box; }
body { margin: 0; width: 2321px; height: 1375px; overflow: hidden; background: #14202b; font-family: Inter, "Liberation Sans", sans-serif; color: #262626; position: relative; }
svg { display: block; flex: none; }
.defs { position: absolute; }
.g-sans { font-family: "Open Sans", sans-serif; }
.g-serif { font-family: "Liberation Serif", serif; }
.window { height: 1375px; display: flex; flex-direction: column; background: #ebebeb; border-top: 1px solid #000; border-radius: 10px 10px 12px 12px; overflow: hidden; }

.titlebar { height: 44px; flex: none; display: flex; align-items: center; justify-content: center; background: linear-gradient(#e8e6e8, #cfcfcf); border-bottom: 2px solid #a5a5a5; }
.lights { position: absolute; left: 16px; top: 11px; display: flex; gap: 16px; }
.lights i { width: 24px; height: 24px; border-radius: 50%; border: 1px solid; }
.red { background: #ff5f57; border-color: #e2463f; }
.amber { background: #ffbd2e; border-color: #e1a116; }
.green { background: #28ca42; border-color: #12ac28; }
.titlebar h1 { margin: 3px 0 0 5px; font-size: 26px; font-weight: 400; letter-spacing: -0.1px; color: #4b4b4b; }

.toolbar { height: 78px; flex: none; display: flex; align-items: center; background: linear-gradient(#f6f6f6, #ebebeb); border-bottom: 2px solid #b2b2b2; }
.toolbar + .toolbar { height: 77px; }
.handle { width: 32px; height: 34px; flex: none; background: radial-gradient(circle at 2px 2px, #bdbdbd 1.3px, transparent 1.6px) 17px 0 / 6px 6px repeat-y; position: relative; }
.handle::after { content: ""; position: absolute; left: 23px; top: 0; width: 6px; height: 34px; background: radial-gradient(circle at 2px 2px, #bdbdbd 1.3px, transparent 1.6px) 0 0 / 6px 6px; }
.handle.first { width: 24px; background-position: 9px 0; }
.handle.first::after { left: 15px; }
.top .first { width: 25px; }
.handle.third { width: 31px; }
.tool { width: 66px; height: 62px; flex: none; display: flex; align-items: center; justify-content: center; position: relative; }
.tool svg { width: 48px; height: 48px; overflow: visible; }
.tool.active { width: 64px; margin: 0 1px; background: #d9d9d9; border: 2px solid #acacac; border-radius: 5px; }
.tool.off svg { opacity: .34; filter: grayscale(.5); }
.corner { position: absolute; right: 7px; bottom: 5px; border: 6px solid transparent; border-top-color: #555; border-bottom: 0; }
.drop { width: 24px; flex: none; display: flex; justify-content: center; }
.drop::before { content: ""; border: 8px solid transparent; border-top-color: #555; border-bottom: 0; }
.vsep { width: 15px; height: 38px; flex: none; display: flex; justify-content: center; }
.vsep::before { content: ""; width: 2px; background: #d0d0d0; }

.workspace { flex: 1; display: flex; gap: 13px; min-height: 0; padding-top: 1px; }
.layers { width: 487px; display: flex; flex-direction: column; }
.dock-title { height: 38px; display: flex; align-items: center; gap: 6px; padding: 1px 3px 0 8px; font-size: 22.500px; letter-spacing: -.2px; }
.dock-title span { flex: 1; }
.dock-tools { height: 61px; display: flex; align-items: center; padding: 0 0 1px 7px; }
.mini { width: 50px; height: 32px; display: flex; justify-content: center; }
.mini svg { width: 32px; height: 32px; overflow: visible; }
.drop.small { width: 24px; margin-left: -1px; }
.tree { flex: 1; background: #fff; border: 1px solid #b5b5b5; padding: 1px 0 1px 1px; }
.row { height: 37px; display: flex; align-items: center; background: linear-gradient(90deg, #005ce6 26%, #0070ec 26%); color: #f3f7ff; padding-left: 46px; }
.row b { margin: 2px 0 0 12px; font-size: 26px; font-weight: 600; letter-spacing: 0; line-height: 29px; padding-top: 1px; border-bottom: 3px solid #fff; }
.check { width: 28px; height: 28px; flex: none; background: #fff; border: 2px solid #b4b4b4; display: flex; }
.check svg { width: 24px; height: 24px; }
.swatch { width: 32px; height: 32px; margin-left: 12px; background: #cdc06d; border: 2px solid #9c9357; }
.canvas { flex: 1; min-width: 0; background: #fff; border: 1px solid #b5b5b5; border-right: 0; overflow: hidden; }
.land path { fill: #dab400; stroke: #232323; stroke-width: 1.500px; stroke-linejoin: round; vector-effect: non-scaling-stroke; }
.land .plain { stroke: none; }
.land .line { fill: none; }
.land .bay { fill: #fff; }

.status { height: 61px; flex: none; display: flex; align-items: center; padding: 1px 0 0 8px; font-size: 22.500px; color: #161616; white-space: nowrap; }
.field { height: 46px; display: flex; align-items: center; background: #fff; border: 2px solid #acacac; border-radius: 4px; flex: none; }
.locator { width: 428px; height: 49px; padding-left: 16px; gap: 14px; color: #7c7c7c; font-size: 25px; }
.legend { width: 38px; margin-left: 16px; overflow: hidden; flex: none; }
.lb-coord { width: 122px; margin-left: 18px; letter-spacing: -.1px; flex: none; }
.coord { width: 266px; justify-content: center; }
.mouse { margin: 0 27px 0 8px; }
.lb-scale { width: 63px; flex: none; }
.combo { width: 188px; height: 49px; padding-left: 5px; justify-content: space-between; }
.combo i { width: 42px; align-self: stretch; background: linear-gradient(#fff, #eee); border-left: 1px solid #bbb; display: flex; align-items: center; justify-content: center; }
.combo i::before { content: ""; border: 8px solid transparent; border-top: 9px solid #555; border-bottom: 0; }
.lock { margin: 0 17px 0 23px; }
.lb-mag { width: 104px; flex: none; }
.spin { padding-left: 8px; justify-content: space-between; }
.mag { width: 189px; }
.rot { width: 181px; }
.spin i { width: 28px; align-self: stretch; border-left: 2px solid #c0c0c0; display: flex; flex-direction: column; align-items: center; justify-content: center; gap: 10px; }
.spin i::before, .spin i::after { content: ""; border: 7px solid transparent; }
.spin i::before { border-top: 0; border-bottom: 8px solid #555; }
.spin i::after { border-bottom: 0; border-top: 8px solid #555; }
.lb-rot { width: 106px; margin-left: 19px; flex: none; }
.status .check { margin-left: 13px; }
.lb-render { width: 110px; padding-left: 10px; letter-spacing: -.2px; flex: none; }
.epsg { width: 187px; height: 51px; flex: none; display: flex; align-items: center; gap: 5px; padding-left: 4px; background: #d8d8d8; border: 2px solid #a6a6a6; border-radius: 4px; font-size: 22px; letter-spacing: -.1px; }
.bubble { margin-left: 19px; }
.grip { width: 18px; height: 18px; margin: auto 0 2px auto; background: radial-gradient(circle at 3px 3px, #aaa 1.300px, transparent 1.600px) 0 0 / 6px 6px; clip-path: polygon(100% 0, 100% 100%, 0 100%); }

.menu { position: absolute; background: #fff; border: 2px solid #949494; box-shadow: 0 12px 40px rgba(0,0,0,.34); font-size: 27px; display: flex; flex-direction: column; }
.menu a { height: 50px; flex: none; display: grid; grid-template-columns: 38px 1fr auto; align-items: center; padding: 0 9px 0 12px; white-space: nowrap; }
.menu a span { grid-column: 2; grid-row: 1; padding-left: 4px; letter-spacing: -.03px; }
.menu a svg { width: 32px; height: 32px; grid-row: 1; grid-column: 1; }
.menu u { text-underline-offset: 5px; text-decoration-thickness: 1.500px; text-decoration-skip-ink: none; }
.menu .box { width: 28px; height: 28px; margin-left: 2px; border: 2px solid #b4b4b4; grid-row: 1; grid-column: 1; }
.menu hr { width: 506px; height: 4px; margin: 0 0 0 7px; border: 0; background: linear-gradient(#bdbdbd, #bdbdbd) 0 0 / 100% 1px no-repeat; flex: none; }
.menu .disabled { color: #bdbdbd; }
.menu .disabled svg { opacity: .35; }
.menu .hot { background: #76a3f1; color: #fff; border: 2px solid #6b93d5; border-width: 2px 0; }
.menu .sub::after { content: ""; grid-column: 3; grid-row: 1; margin-top: -3px; border: 7px solid transparent; border-left: 9px solid #555; border-right: 0; }
.menu .sub.hot::after { border-left-color: #c5d8fa; }
.main-menu { left: 318px; top: 317px; width: 526px; height: 870px; }
.main-menu a:first-child { height: 49px; }
.main-menu a:last-child { height: 47px; padding-top: 3px; }
.main-menu .hot { margin: 0 -2px; padding: 0 11px 0 14px; }
.sub-menu { left: 842px; top: 1033px; width: 518px; height: 200px; border-top: 0; }
.sub-menu a span { padding-top: 2px; }
.sub-menu .hot { margin: 0 -2px; padding-left: 12px; border: 2px solid #6b93d5; }
```
